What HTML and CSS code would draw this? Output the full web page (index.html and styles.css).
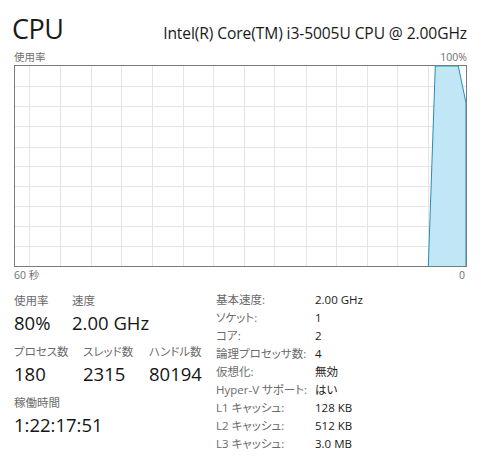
FILE: index.html
```html
<!DOCTYPE html>
<html lang="ja">
<head>
<meta charset="utf-8">
<link rel="stylesheet" href="styles.css">
</head>
<body>
<div class="page">
  <div class="header">
    <div class="title">CPU</div>
    <div class="model">Intel(R) Core(TM) i3-5005U CPU @ 2.00GHz</div>
  </div>
  <div class="axis top">
    <span>使用率</span>
    <span>100%</span>
  </div>
  <svg class="chart" width="453" height="202" viewBox="0 0 453 202">
    <g stroke="#e4e4e4" stroke-width="1">
      <line x1="15.5" y1="0" x2="15.5" y2="202"/>
      <line x1="46.5" y1="0" x2="46.5" y2="202"/>
      <line x1="77.5" y1="0" x2="77.5" y2="202"/>
      <line x1="107.5" y1="0" x2="107.5" y2="202"/>
      <line x1="138.5" y1="0" x2="138.5" y2="202"/>
      <line x1="169.5" y1="0" x2="169.5" y2="202"/>
      <line x1="199.5" y1="0" x2="199.5" y2="202"/>
      <line x1="230.5" y1="0" x2="230.5" y2="202"/>
      <line x1="260.5" y1="0" x2="260.5" y2="202"/>
      <line x1="292.5" y1="0" x2="292.5" y2="202"/>
      <line x1="322.5" y1="0" x2="322.5" y2="202"/>
      <line x1="353.5" y1="0" x2="353.5" y2="202"/>
      <line x1="383.5" y1="0" x2="383.5" y2="202"/>
      <line x1="414.5" y1="0" x2="414.5" y2="202"/>
      <line x1="444.5" y1="0" x2="444.5" y2="202"/>
      <line x1="0" y1="21.5" x2="453" y2="21.5"/>
      <line x1="0" y1="41.5" x2="453" y2="41.5"/>
      <line x1="0" y1="61.5" x2="453" y2="61.5"/>
      <line x1="0" y1="82.5" x2="453" y2="82.5"/>
      <line x1="0" y1="101.5" x2="453" y2="101.5"/>
      <line x1="0" y1="121.5" x2="453" y2="121.5"/>
      <line x1="0" y1="141.5" x2="453" y2="141.5"/>
      <line x1="0" y1="161.5" x2="453" y2="161.5"/>
      <line x1="0" y1="181.5" x2="453" y2="181.5"/>
    </g>
    <polygon points="414.3,201.5 421.3,1 444.3,1 452,38 452,201.5" fill="#c1e6f6" stroke="#2a8db3" stroke-width="1"/>
    <rect x="0.5" y="0.5" width="452" height="201" fill="none" stroke="#7b7b7b" stroke-width="1"/>
  </svg>
  <div class="axis bottom">
    <span>60 秒</span>
    <span>0</span>
  </div>
  <div class="details">
    <div class="stats">
      <div class="row">
        <div class="stat w58"><div class="label">使用率</div><div class="value">80%</div></div>
        <div class="stat"><div class="label">速度</div><div class="value">2.00 GHz</div></div>
      </div>
      <div class="row">
        <div class="stat w69"><div class="label">プロセス数</div><div class="value">180</div></div>
        <div class="stat w66"><div class="label">スレッド数</div><div class="value">2315</div></div>
        <div class="stat"><div class="label">ハンドル数</div><div class="value">80194</div></div>
      </div>
      <div class="row">
        <div class="stat"><div class="label">稼働時間</div><div class="value">1:22:17:51</div></div>
      </div>
    </div>
    <dl class="specs">
      <dt>基本速度:</dt><dd>2.00 GHz</dd>
      <dt>ソケット:</dt><dd>1</dd>
      <dt>コア:</dt><dd>2</dd>
      <dt>論理プロセッサ数:</dt><dd>4</dd>
      <dt>仮想化:</dt><dd>無効</dd>
      <dt>Hyper-V サポート:</dt><dd>はい</dd>
      <dt>L1 キャッシュ:</dt><dd>128 KB</dd>
      <dt>L2 キャッシュ:</dt><dd>512 KB</dd>
      <dt>L3 キャッシュ:</dt><dd>3.0 MB</dd>
    </dl>
  </div>
</div>
</body>
</html>
```
FILE: styles.css
```css
html, body {
  margin: 0;
  padding: 0;
  background: #ffffff;
}
body {
  font-family: "Open Sans", "Noto Sans CJK JP", sans-serif;
  font-feature-settings: "palt";
  color: #1a1a1a;
}
.page {
  width: 485px;
  padding: 0 0 0 14px;
  box-sizing: border-box;
}
.header {
  display: flex;
  justify-content: space-between;
  align-items: baseline;
  width: 453px;
  margin-left: -2px;
  padding-top: 10px;
}
.title {
  font-size: 27px;
  font-weight: 400;
  line-height: 38px;
  letter-spacing: -0.5px;
}
.model {
  font-size: 15.6px;
  line-height: 20px;
  margin-right: -2px;
  letter-spacing: -0.1px;
}
.axis {
  display: flex;
  justify-content: space-between;
  width: 453px;
  font-size: 10.5px;
  color: #707070;
}
.axis.top {
  line-height: 14px;
  margin-top: 2px;
  height: 15px;
}
.axis.bottom {
  line-height: 14px;
  height: 14px;
  margin-top: 1px;
}
.axis.bottom span:last-child {
  margin-right: 2px;
}
.chart {
  display: block;
}
.details {
  display: flex;
  margin-top: 10px;
}
.stats {
  width: 202px;
  display: flex;
  flex-direction: column;
}
.row {
  display: flex;
  height: 51px;
}
.stat {
  display: flex;
  flex-direction: column;
}
.w58 { width: 58px; }
.w69 { width: 69px; }
.w66 { width: 66px; }
.label {
  font-size: 11.5px;
  line-height: 18px;
  color: #6b6b6b;
}
.value {
  font-size: 18.5px;
  line-height: 26px;
  color: #151515;
}
.specs {
  margin: -1px 0 0 0;
  display: grid;
  grid-template-columns: 99px auto;
  grid-auto-rows: 18px;
  font-size: 11.5px;
  line-height: 18px;
}
.specs dt {
  color: #6b6b6b;
}
.specs dd {
  margin: 0;
  color: #1a1a1a;
}
```
